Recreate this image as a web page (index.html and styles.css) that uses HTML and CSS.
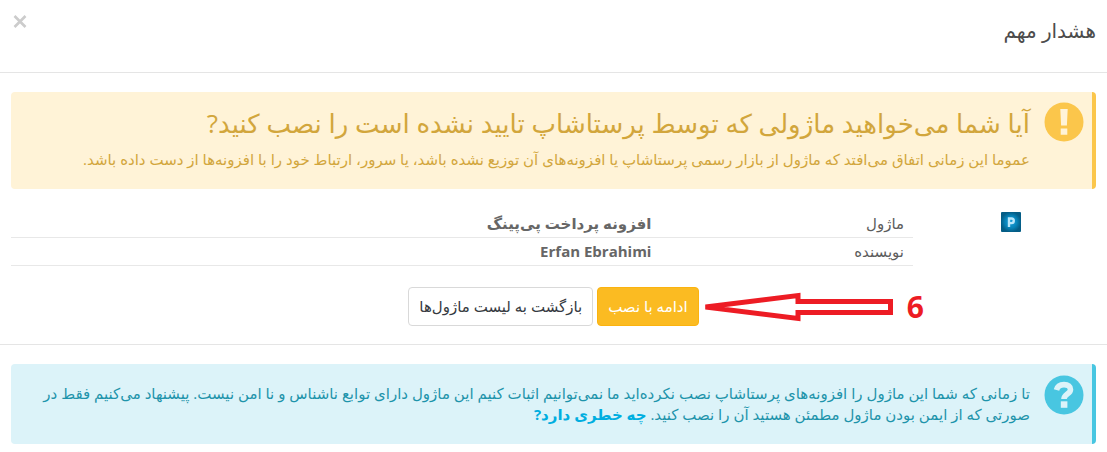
FILE: index.html
```html
<!DOCTYPE html>
<html lang="fa" dir="rtl">
<head>
<meta charset="utf-8">
<meta name="viewport" content="width=device-width, initial-scale=1">
<title>هشدار مهم</title>
<link rel="stylesheet" href="styles.css">
</head>
<body>
<main class="modal">
  <header class="modal-header">
    <h1 class="modal-title">هشدار مهم</h1>
    <button class="close" type="button" aria-label="بستن">
      <svg width="14" height="14" viewBox="0 0 14 14" aria-hidden="true"><path d="M1.500 2l11 11M12.500 2l-11 11" stroke="currentColor" stroke-width="2.600" fill="none"/></svg>
    </button>
  </header>
  <section class="modal-body">
    <div class="alert alert-warning">
      <svg class="alert-icon" viewBox="0 0 40 40" aria-hidden="true">
        <circle cx="20" cy="20" r="19.500" fill="#fbc64b"/>
        <path d="M16.300 7h7.400l-.8 16.500h-5.800zM16.700 26.500h6.600v6.300h-6.600z" fill="#fff3d7"/>
      </svg>
      <div class="alert-text">
        <h2 class="alert-title">آیا شما می‌خواهید ماژولی که توسط پرستاشاپ تایید نشده است را نصب کنید?</h2>
        <p>عموما این زمانی اتفاق می‌افتد که ماژول از بازار رسمی پرستاشاپ یا افزونه‌های آن توزیع نشده باشد، یا سرور، ارتباط خود را با افزونه‌ها از دست داده باشد.</p>
      </div>
    </div>
    <div class="module">
      <div class="module-logo">
        <svg width="20" height="20" viewBox="0 0 20 20" aria-hidden="true">
          <defs><radialGradient id="glow"><stop offset="0" stop-color="#1aa0dc"/><stop offset=".6" stop-color="#0783b8"/><stop offset="1" stop-color="#045d86"/></radialGradient></defs>
          <rect width="20" height="20" rx="1" fill="url(#glow)"/>
          <path d="M8 15V6.500h2.500a2.300 2.300 0 0 1 0 4.600H8" fill="none" stroke="#b9e6fa" stroke-width="2.400"/>
        </svg>
      </div>
      <table class="module-table">
        <tbody>
          <tr><th scope="row">ماژول</th><td>افزونه پرداخت پی‌پینگ</td></tr>
          <tr><th scope="row">نویسنده</th><td dir="ltr">Erfan Ebrahimi</td></tr>
        </tbody>
      </table>
    </div>
    <div class="actions">
      <div class="step">
        <button class="btn btn-primary" type="button">ادامه با نصب</button>
        <div class="callout">
          <svg width="190" height="30" viewBox="0 0 190 30" aria-hidden="true"><path d="M2.500 15L95 3.500v6h92.500v11H95v6z" fill="#fff" stroke="#ed1c24" stroke-width="5" stroke-miterlimit="2"/></svg>
          <span>6</span>
        </div>
      </div>
      <button class="btn btn-secondary" type="button">بازگشت به لیست ماژول‌ها</button>
    </div>
  </section>
  <footer class="modal-footer">
    <div class="alert alert-info">
      <svg class="alert-icon" viewBox="0 0 40 40" aria-hidden="true">
        <circle cx="20" cy="20" r="19.500" fill="#48c6e1"/>
        <path d="M12.500 15c1-4.200 3.500-5.400 7.500-5.400 4.300 0 6.500 2.100 6.500 4.800 0 4.800-6.500 4.600-6.500 9.600" fill="none" stroke="#dcf3f9" stroke-width="5.600"/>
        <path d="M16.800 26.300h6.600v6.500h-6.600z" fill="#dcf3f9"/>
      </svg>
      <p class="alert-text">تا زمانی که شما این ماژول را افزونه‌های پرستاشاپ نصب نکرده‌اید ما نمی‌توانیم اثبات کنیم این ماژول دارای توابع ناشناس و نا امن نیست. پیشنهاد می‌کنیم فقط در صورتی که از ایمن بودن ماژول مطمئن هستید آن را نصب کنید. <a href="#">چه خطری دارد?</a></p>
    </div>
  </footer>
</main>
</body>
</html>
```
FILE: styles.css
```css
* { box-sizing: border-box; }
body { margin: 0; background: #fff; color: #5c5c5c; font: 15px/21px "Open Sans", "DejaVu Sans", sans-serif; }
h1, h2, p { margin: 0; font-weight: 400; }
button { font: inherit; }
.modal-header { display: flex; justify-content: space-between; align-items: flex-start; padding: 14px 11px 24px; border-bottom: 1px solid #e5e5e5; }
.modal-title { font-size: 20px; line-height: 34px; color: #4c4c4c; }
.close { display: flex; padding: 0; margin: 0 2px; border: 0; background: none; color: #ccc; }
.modal-body { padding: 19px 11px 18px; }
.alert { display: flex; gap: 14px; padding: 10px 8px 19px 16px; border-radius: 4px; border-right: 4px solid; }
.alert-icon { flex: none; width: 40px; height: 40px; }
.alert-text { flex: 1; min-width: 0; }
.alert-warning { background: #fff3d7; color: #d2a63c; border-color: #fbc64b; }
.alert-title { font-size: 26px; line-height: 42px; margin-bottom: 5px; }
.alert-info { background: #dcf3f9; color: #1e94ab; border-color: #48c6e1; padding-top: 11px; }
.alert-info .alert-text { padding-top: 8px; }
.alert-info a { color: #00aee0; font-weight: 700; text-decoration: none; }
.module { display: grid; grid-template-columns: 183fr 902fr; margin-top: 21px; }
.module-logo { display: flex; justify-content: center; align-items: flex-start; padding: 2px 0 0 13px; }
.module-table { width: 100%; border-collapse: collapse; }
.module-table th, .module-table td { padding: 3px 9px; border-bottom: 1px solid #e8e8e8; text-align: right; }
.module-table th { width: 28%; font-weight: 400; }
.module-table td { font-weight: 700; color: #666; }
.actions { display: flex; justify-content: center; gap: 4px; margin-top: 21px; }
.step { position: relative; }
.btn { height: 39px; padding: 0 10px; border: 1px solid; border-radius: 4px; white-space: nowrap; }
.btn-primary { background: #fbbb22; border-color: #fbb30f; color: #fff; }
.btn-secondary { background: #fff; border-color: #d9d9d9; color: #363a41; }
.callout { position: absolute; top: 3px; left: 100%; margin-left: 4px; display: flex; flex-direction: row-reverse; align-items: center; gap: 14px; color: #ed1c24; font: 700 30px/34px "Open Sans", sans-serif; }
.modal-footer { border-top: 1px solid #e5e5e5; padding: 19px 11px 8px; }
```
